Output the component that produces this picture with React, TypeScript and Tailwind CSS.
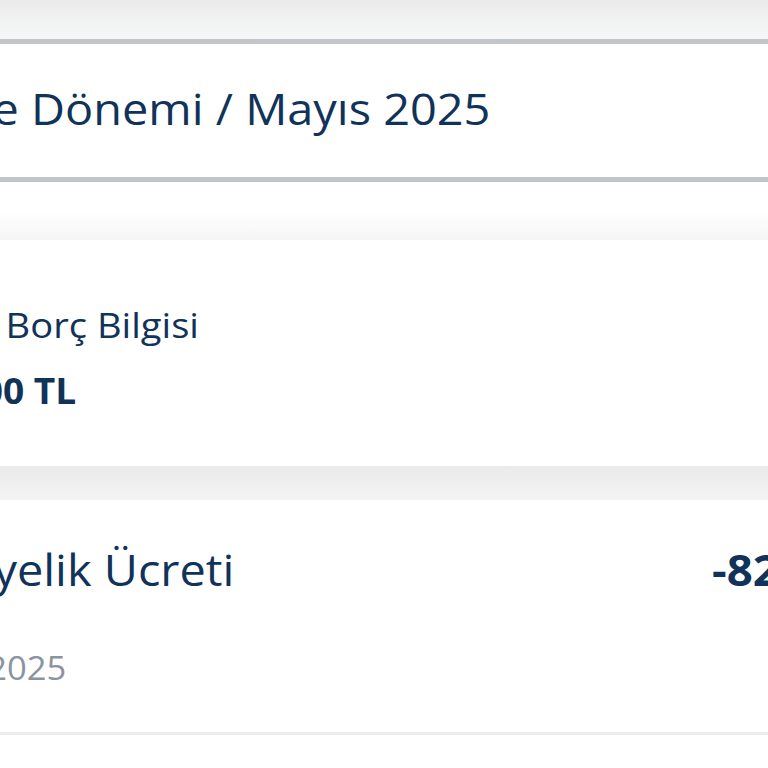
export default function App() {
  return (
    <div
      className="w-[768px] h-[768px] overflow-hidden bg-white text-[#11335a]"
      style={{ fontFamily: '"Open Sans", "Noto Sans", sans-serif' }}
    >
      {/* top strip */}
      <div className="h-[39px] bg-linear-to-b from-[#ebebeb] to-[#f6f7f8]" />

      {/* period header */}
      <div className="border-y-[5px] border-[#c3c6c9] bg-white h-[143px] flex items-center">
        <div className="w-[490px] shrink-0 flex justify-end">
          <span className="whitespace-nowrap text-[43px] leading-none font-[500] pb-[4px] scale-x-[1.09] origin-right">
            Ödeme Dönemi / Mayıs 2025
          </span>
        </div>
      </div>

      {/* gap */}
      <div className="h-[58px] bg-linear-to-b from-white via-white to-[#f5f5f5]" />

      {/* debt card */}
      <div className="h-[226px] bg-white flex flex-col pt-[63px] gap-[22px]">
        <div className="w-[199px] shrink-0 flex justify-end">
          <span className="whitespace-nowrap text-[35px] leading-[44px] font-[500] scale-x-[1.09] origin-right">
            Toplam Borç Bilgisi
          </span>
        </div>
        <div className="w-[76px] shrink-0 flex justify-end">
          <span className="whitespace-nowrap text-[35px] leading-[44px] font-bold scale-x-[1.06] origin-right">
            820,00 TL
          </span>
        </div>
      </div>

      {/* card gap shadow */}
      <div className="h-[34px] bg-linear-to-b from-[#eaeaea] to-[#f3f3f3]" />

      {/* transaction row */}
      <div className="h-[235px] bg-white border-b-[3px] border-[#ececec] flex flex-col pt-[42px]">
        <div className="flex items-center">
          <div className="w-[234px] shrink-0 flex justify-end">
            <span className="whitespace-nowrap text-[43px] leading-[56px] font-[500] scale-x-[1.09] origin-right">
              Üyelik Ücreti
            </span>
          </div>
          <div className="ml-[478px] shrink-0 flex">
            <span className="whitespace-nowrap text-[43px] leading-[56px] font-bold scale-x-[1.06] origin-left">
              -820,00 TL
            </span>
          </div>
        </div>
        <div className="w-[66px] shrink-0 flex justify-end mt-[50px]">
          <span className="whitespace-nowrap text-[32px] leading-[40px] font-[450] text-[#8a939e] scale-x-[1.08] origin-right">
            01.05.2025
          </span>
        </div>
      </div>
    </div>
  );
}
